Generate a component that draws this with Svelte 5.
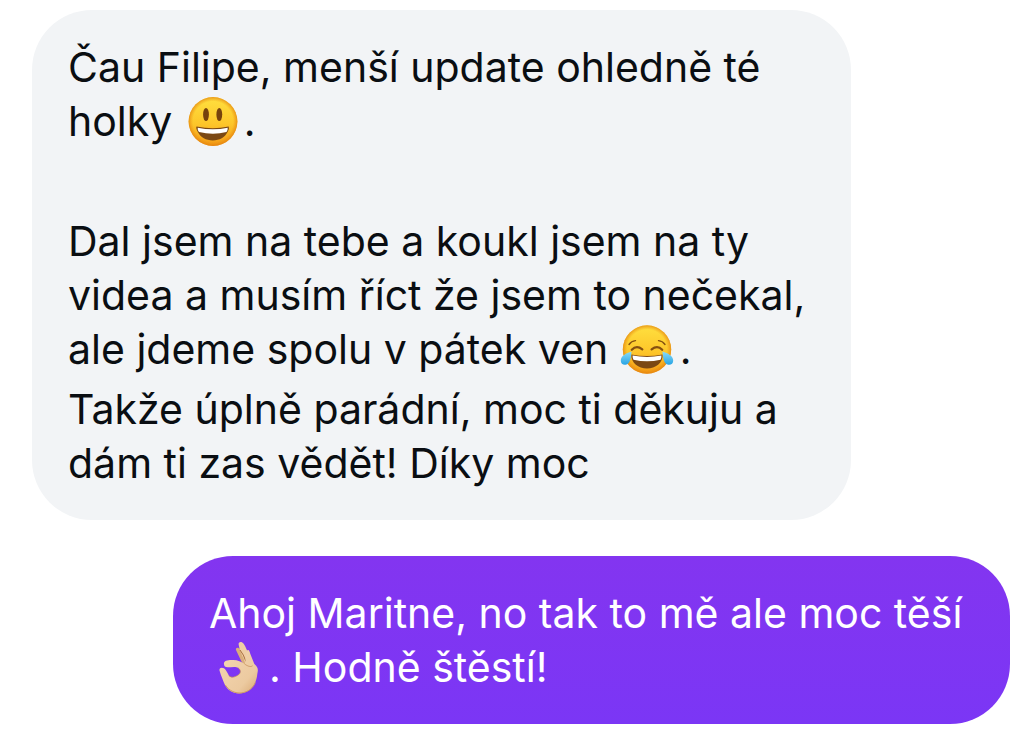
<script lang="ts">
  type Part = { text?: string; emoji?: "grin" | "joy" | "ok" };
  type Message = { from: "them" | "me"; lines: Part[][] };

  const messages: Message[] = [
    {
      from: "them",
      lines: [
        [
          { text: "Čau Filipe, menší update ohledně té holky " },
          { emoji: "grin" },
          { text: "." },
        ],
        [],
        [
          {
            text: "Dal jsem na tebe a koukl jsem na ty videa a musím říct že jsem to nečekal, ale jdeme spolu v pátek ven ",
          },
          { emoji: "joy" },
          { text: "." },
        ],
        [
          {
            text: "Takže úplně parádní, moc ti děkuju a dám ti zas vědět! Díky moc",
          },
        ],
      ],
    },
    {
      from: "me",
      lines: [
        [
          { text: "Ahoj Maritne, no tak to mě ale moc těší " },
          { emoji: "ok" },
          { text: ". Hodně štěstí!" },
        ],
      ],
    },
  ];
</script>

<svg class="defs" width="0" height="0" aria-hidden="true">
  <defs>
    <linearGradient id="face" x1="0" y1="0" x2="0" y2="1">
      <stop offset="0" stop-color="#ffe03f" />
      <stop offset="0.55" stop-color="#fdc62a" />
      <stop offset="1" stop-color="#f39a16" />
    </linearGradient>
    <radialGradient id="rim" cx="0.5" cy="0.5" r="0.5">
      <stop offset="0.82" stop-color="#e88a10" stop-opacity="0" />
      <stop offset="1" stop-color="#e07c0c" stop-opacity="0.7" />
    </radialGradient>
    <linearGradient id="tear" x1="0" y1="0" x2="0" y2="1">
      <stop offset="0" stop-color="#8adcf8" />
      <stop offset="1" stop-color="#27a3e4" />
    </linearGradient>
    <linearGradient id="skin" x1="0" y1="0" x2="1" y2="1">
      <stop offset="0" stop-color="#f5d7b2" />
      <stop offset="0.7" stop-color="#eccaa0" />
      <stop offset="1" stop-color="#d9a873" />
    </linearGradient>
  </defs>
</svg>

<main class="thread">
  {#each messages as message}
    <div class="bubble {message.from}">
      {#each message.lines as line}
        <p class="line">
          {#each line as part}{#if part.emoji === "grin"}<svg class="emoji" viewBox="1 0 60 54" role="img" aria-label="grinning face">
                <circle cx="30" cy="27.5" r="24.4" fill="url(#face)" />
                <circle cx="30" cy="27.5" r="24.4" fill="url(#rim)" />
                <ellipse cx="23" cy="20.5" rx="2.9" ry="6.6" fill="#76420d" />
                <ellipse cx="36.3" cy="20.5" rx="2.9" ry="6.6" fill="#76420d" />
                <path d="M13.5 32.5Q30 36 45.7 32.5Q46.5 34 44.8 37.6C42 43.5 36.5 46.5 29.8 46.5S17.5 43.5 14.6 37.6Q12.7 34 13.5 32.5Z" fill="#7b4813" />
                <path d="M14.7 33.8Q30 36.8 44.7 33.8Q45 36 43.5 38Q30 41.5 16 38Q14.3 36 14.7 33.8Z" fill="#fff" />
              </svg>{:else if part.emoji === "joy"}<svg class="emoji" viewBox="4 0 60 54" role="img" aria-label="face with tears of joy">
                <circle cx="31" cy="27.5" r="24.2" fill="url(#face)" />
                <circle cx="31" cy="27.5" r="24.2" fill="url(#rim)" />
                <g fill="none" stroke="#855010" stroke-linecap="round">
                  <path d="M13 22.5Q15.4 19 19.5 18.6M42.5 18.6Q46.6 19 49 22.5" stroke-width="1.4" />
                  <path d="M15.8 27.7Q20.5 22.8 26.3 27.3M35.6 27.3Q41.5 22.8 46.2 27.7" stroke-width="2.3" />
                </g>
                <path d="M15.3 32.5Q31 35.5 46.6 32.5C47 41 39.5 46.5 31 46.5S15 41 15.3 32.5Z" fill="#7b4813" />
                <path d="M16.5 33.6Q31 36.5 45.5 33.6Q45.5 36 44.5 37.8Q31 40.8 17.5 37.8Q16.5 36 16.5 33.6Z" fill="#fff" />
                <path d="M15.5 29.5C10 31 5 34.2 4.8 38.2C4.6 41.5 7 43.2 9.6 42.8C14.5 42 15 35.5 15.5 29.5Z" fill="url(#tear)" />
                <path d="M46.5 29.5C52 31 57 34.2 57.2 38.2C57.4 41.5 55 43.2 52.4 42.8C47.5 42 47 35.5 46.5 29.5Z" fill="url(#tear)" />
              </svg>{:else if part.emoji === "ok"}<svg class="emoji" viewBox="9 12 180 162" role="img" aria-label="OK hand">
                <path d="M90 42C88 35 97 32 102 40L123 72L118 94L106 76Z" fill="#d9ad7a" />
                <path d="M98 26C96 17 107 15 113 23C119 32 123 43 128 54L140 88L121 94L113 68C107 56 100 40 98 26Z" fill="#efcda5" />
                <path d="M102 42Q113 55 120 77" fill="none" stroke="#a86f3e" stroke-width="3" />
                <path fill-rule="evenodd" d="M54 85C52 76 62 72 77 72C94 71 105 76 117 85C120 66 119 52 124 43C128 39 131 45 133 54L145 84C154 91 157 99 155 108C153 116 154 125 148 139C141 157 126 169 105 172C81 174 65 162 57 147C52 136 45 119 41 105C38 97 46 92 54 97C60 101 63 109 69 119C75 126 86 124 95 118C105 112 106 103 97 96C89 90 75 94 65 94C58 94 54 91 54 85Z" fill="url(#skin)" />
                <path d="M117 85C126 91 134 94 139 90M69 119C76 127 87 123 95 118C105 112 106 103 97 96" fill="none" stroke="#c08a55" stroke-width="2" stroke-linecap="round" />
                <path d="M58 147C70 166 90 172 105 171C128 168 142 155 148 139" fill="none" stroke="#cf9b65" stroke-width="3" />
              </svg>{:else}{part.text}{/if}{/each}
        </p>
      {/each}
    </div>
  {/each}
</main>

<style>
  :global(body) {
    margin: 0;
    background: #fff;
  }

  .defs {
    position: absolute;
  }

  .thread {
    display: flex;
    flex-direction: column;
    gap: 36px;
    padding: 10px 24px 12px 32px;
    font-family: Inter, "Liberation Sans", sans-serif;
    font-size: 41px;
    line-height: 54px;
  }

  .bubble {
    display: flex;
    flex-direction: column;
    gap: 6px;
    box-sizing: border-box;
    padding: 30px 36px;
  }

  .them {
    align-self: flex-start;
    max-width: 819px;
    border-radius: 60px;
    background: #f2f4f6;
    color: #0a0e12;
  }

  .me {
    align-self: flex-end;
    max-width: 837px;
    border-radius: 60px;
    background: linear-gradient(#8335f0, #7b36f5);
    color: #fff;
  }

  .line {
    min-height: 54px;
    margin: 0;
  }

  .emoji {
    width: 60px;
    height: 54px;
    vertical-align: top;
    overflow: visible;
  }
</style>
